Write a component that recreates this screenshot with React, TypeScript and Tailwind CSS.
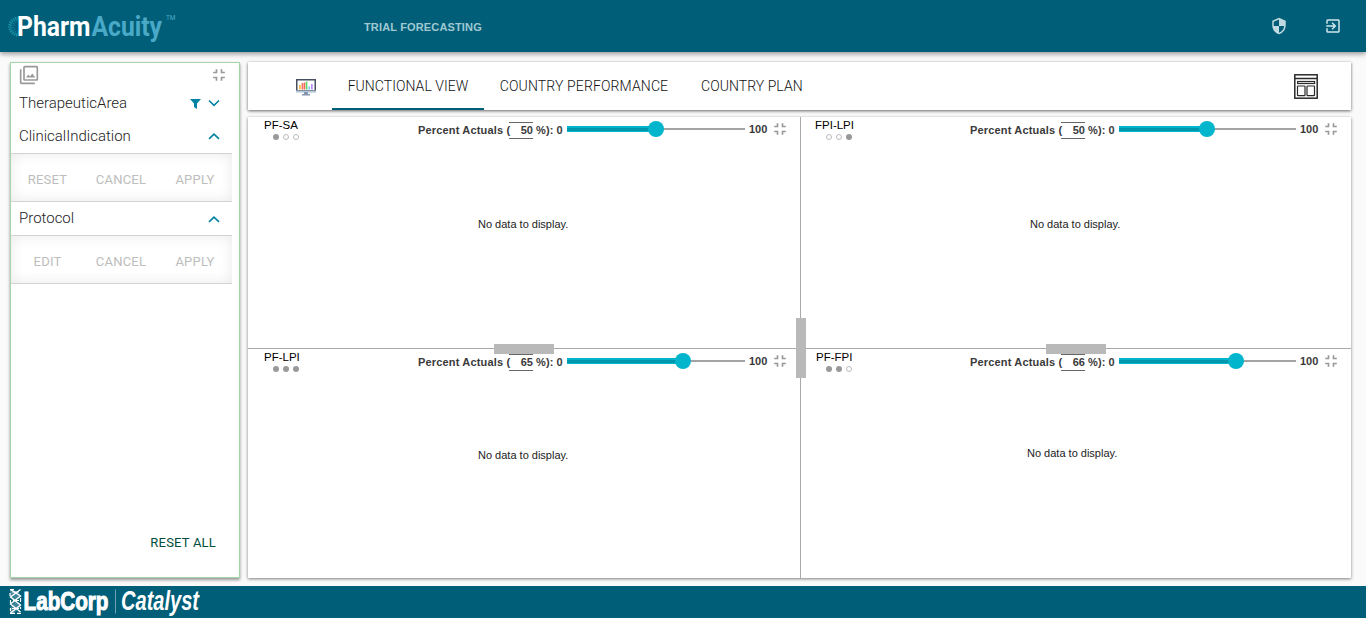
import { MdExitToApp, MdFilter, MdFullscreenExit, MdSecurity } from 'react-icons/md';

function Chevron({ up = false }: { up?: boolean }) {
  return (
    <svg width="12" height="8" viewBox="0 0 12 8" fill="none" stroke="#0083a3" strokeWidth="1.6">
      <path d={up ? 'M1 6.9 6 2.1 11 6.9' : 'M1 1.5 6 6.3 11 1.5'} />
    </svg>
  );
}

function PharmAcuityLogo() {
  return (
    <svg width="190" height="50" viewBox="0 0 190 50" className="block shrink-0 overflow-visible">
      <path d="M18.500 18A8.500 8.500 0 0 0 18.500 35" fill="none" stroke="#1c93a8" strokeWidth="3.4" strokeDasharray="1.2 1" />
      <path d="M19.500 20.500A6 6 0 0 0 19.500 32.500" fill="none" stroke="#14798f" strokeWidth="2" strokeDasharray="1 1" />
      <g fontFamily="Roboto, 'Liberation Sans', sans-serif" fontWeight="700" fontSize="28">
        <text x="17" y="36.3" textLength="73.5" lengthAdjust="spacingAndGlyphs" fill="#fff">Pharm</text>
        <text x="91.5" y="36.3" textLength="70.5" lengthAdjust="spacingAndGlyphs" fill="#4ba9c8">Acuity</text>
      </g>
      <text x="166" y="20" textLength="9.5" lengthAdjust="spacingAndGlyphs" fontFamily="Roboto, sans-serif" fontSize="7.5" fill="#4ba9c8">TM</text>
    </svg>
  );
}

function LabCorpLogo() {
  return (
    <svg width="204" height="32" viewBox="0 0 204 32" className="block overflow-visible">
      <path d="M10 3.5h3l8 5.500-5 5.500 5 6-7 6.500h-4v-5l5-6.500-5-6z" fill="#fff" opacity=".25" />
      <g fill="none" stroke="#fff">
        <path d="M10.500 3.500 20.500 10 10.500 18 20.500 26" strokeWidth="1.4" />
        <path d="M20.500 3.500 10.500 11 20.500 19 10.500 27" strokeWidth="1.4" />
        <path d="M10 7v3M10.500 14v3M10.500 22v3M20.500 12v4M20.500 21v2M12 6h7M13 14.500h6M12 22.500h7M10 3.700h4M17 27.300h4M10 27.300h5" strokeWidth="1.2" />
      </g>
      <g fontFamily="'Liberation Sans', Arial, sans-serif" fontWeight="700" fill="#fff">
        <text x="23.5" y="23.7" fontSize="26.5" textLength="85" lengthAdjust="spacingAndGlyphs" stroke="#fff" strokeWidth="1.1">LabCorp</text>
        <text x="121" y="23.7" fontSize="27" textLength="78" lengthAdjust="spacingAndGlyphs" fontStyle="italic">Catalyst</text>
      </g>
      <path d="M115.5 3.5v24" stroke="#6fa3b3" />
    </svg>
  );
}

function MonitorChart() {
  return (
    <svg width="22" height="18" viewBox="0 0 22 18" className="block">
      <rect x="1.75" y="1.75" width="18.5" height="11" fill="#fff" stroke="#48505f" strokeWidth="1.5" />
      <path d="M1 12.500h20v2.200H1z" fill="#b9cbdc" />
      <path d="M9 14h4v2h2v1.500H7V16h2z" fill="#8495ad" />
      <path d="M4 7h1.800v4.500H4z" fill="#f5c04e" />
      <path d="M6.600 5h1.800v6.500H6.600z" fill="#fa6f60" />
      <path d="M8.800 4.500h1.500v7H8.800z" fill="#f06d55" />
      <path d="M10.800 3.500h1.600v8h-1.600z" fill="#5fd36c" />
      <path d="M13.300 8.500H15v3h-1.700z" fill="#7ecbf7" />
      <path d="M16 6h1.700v5.500H16z" fill="#b48cf5" />
    </svg>
  );
}

function LayoutIcon() {
  return (
    <svg width="24" height="25" viewBox="0 0 24 25" fill="none" stroke="#2a2a2a" strokeWidth="1.2" className="block">
      <rect x=".8" y=".8" width="22.4" height="23.4" strokeWidth="1.5" />
      <path d="M1 4.500h22" strokeWidth="1.5" />
      <rect x="3.6" y="7.5" width="17" height="2" />
      <rect x="3.5" y="12" width="7.5" height="9.6" rx=".6" />
      <rect x="13" y="12" width="7.5" height="9.6" rx=".6" />
    </svg>
  );
}

function ActionRow({ first }: { first: string }) {
  return (
    <div className="flex h-[49px] w-[221px] items-center border-y border-[#d3d3d3] pt-1 font-['Roboto'] text-[13px] tracking-[0.2px] text-[#bdbdbd] shadow-[inset_0_0_14px_rgba(0,0,0,0.09)]">
      <span className="w-[73px] text-center">{first}</span>
      <span className="w-[74px] text-center">CANCEL</span>
      <span className="w-[74px] text-center">APPLY</span>
    </div>
  );
}

function Sidebar() {
  return (
    <aside className="flex w-[230px] shrink-0 flex-col border border-[#a5d6a7] bg-white shadow-[0_2px_3px_rgba(0,0,0,0.4)]">
      <div className="flex h-6 items-center justify-between pl-2 pr-[10px]">
        <MdFilter size={20} color="#999" />
        <MdFullscreenExit size={20} color="#999" />
      </div>
      <div className="flex h-8 items-center pl-2 pr-[19px]">
        <span className="grow font-['Roboto'] text-[15px] font-light text-[#222]">TherapeuticArea</span>
        <svg width="11" height="10" viewBox="0 0 11 10" className="mr-[7px] mt-px">
          <path d="M0 0h11L7 4.500V10L4 8V4.500z" fill="#0083a3" />
        </svg>
        <Chevron />
      </div>
      <div className="flex h-[34px] items-center pl-2 pr-[19px]">
        <span className="grow font-['Roboto'] text-[15px] font-light text-[#222]">ClinicalIndication</span>
        <Chevron up />
      </div>
      <ActionRow first="RESET" />
      <div className="flex h-[33px] items-center pl-2 pr-[19px]">
        <span className="grow font-['Roboto'] text-[15px] font-light text-[#222]">Protocol</span>
        <Chevron up />
      </div>
      <ActionRow first="EDIT" />
      <div className="mb-[24px] mt-auto pr-[23px] text-right font-['Roboto'] text-[13px] leading-5 tracking-[0.2px] text-[#004d40]">
        RESET ALL
      </div>
    </aside>
  );
}

interface ForecastProps {
  name: string;
  nameStyle: string;
  dots: boolean[];
  percent: number;
  fill: number;
  leading: string;
  track: string;
  message: string;
}

function Forecast({ name, nameStyle, dots, percent, fill, leading, track, message }: ForecastProps) {
  return (
    <section className="min-w-0">
      <div className="flex h-[30px]">
        <div className={`shrink-0 pt-px ${leading}`}>
          <div className={`h-[14px] text-[11.5px] leading-[15px] text-black ${nameStyle}`}>{name}</div>
          <div className="flex gap-1 pl-[9px] pt-0.5">
            {dots.map((on, i) => (
              <i key={i} className={on ? 'size-1.5 rounded-full bg-[#999]' : 'size-1.5 rounded-full border border-[#bbb]'} />
            ))}
          </div>
        </div>
        <div className="flex w-[149px] shrink-0 items-start whitespace-nowrap pt-[5px] text-[11px] font-bold leading-4 tracking-[0.17px] text-[#3a3a3a]">
          <span className="w-[91px]">Percent Actuals (</span>
          <span className="h-[17px] w-6 border-y border-[#666] text-right leading-[15px] tracking-normal">{percent}</span>
          <span className="ml-[3px] tracking-[0.1px]">%): 0</span>
        </div>
        <div className={`relative mt-[9px] flex h-1.5 shrink-0 items-center ${track}`}>
          <div className="h-1.5 border-b border-t-2 border-[#00b5cc] bg-[#0097ac]" style={{ width: fill }} />
          <div className="h-0.5 grow bg-[#a3a3a3]" />
          <i className="absolute -top-[5px] size-4 rounded-full bg-[#00b5cc]" style={{ left: fill - 8 }} />
        </div>
        <span className="ml-1 w-[21px] shrink-0 pt-1 text-[11px] font-bold leading-4 text-[#3a3a3a]">100</span>
        <MdFullscreenExit size={20} color="#999" className="mt-0.5 shrink-0" />
      </div>
      <div className={`text-[11px] leading-4 text-[#222] ${message}`}>No data to display.</div>
    </section>
  );
}

export default function App() {
  return (
    <div className="flex h-[618px] w-[1366px] flex-col overflow-hidden bg-[#fafafa] font-['Liberation_Sans',Arial,sans-serif]">
      <header className="z-10 flex h-[52px] shrink-0 items-center bg-[#005e78] shadow-[0_2px_5px_rgba(0,0,0,0.4)]">
        <div className="mb-0.5 w-[364px]"><PharmAcuityLogo /></div>
        <span className="grow pt-0.5 text-[11px] font-bold tracking-[0.15px] text-[#9fc8d2]">TRIAL FORECASTING</span>
        <MdSecurity size={18} color="#bfdae1" />
        <MdExitToApp size={18} color="#cfe5ea" className="ml-9 mr-6" />
      </header>
      <div className="flex h-[534px] shrink-0 gap-2 pb-2 pl-[10px] pr-[15px] pt-[10px]">
        <Sidebar />
        <main className="flex grow flex-col">
          <nav className="flex h-[48px] shrink-0 bg-white font-['Roboto'] text-sm font-light leading-[48px] text-[#111] shadow-[0_1px_3px_rgba(0,0,0,0.6)]">
            <div className="w-[84px] pl-[47px] pt-4"><MonitorChart /></div>
            <div className="w-[152px] border-b-2 border-[#005e78] text-center tracking-[0.05px]">FUNCTIONAL VIEW</div>
            <div className="w-[200px] text-center tracking-[0.13px]">COUNTRY PERFORMANCE</div>
            <div className="grow pl-[17px] tracking-[0.05px]">COUNTRY PLAN</div>
            <div className="pr-[33px] pt-3"><LayoutIcon /></div>
          </nav>
          <div className="relative mt-[7px] grid h-[461px] grid-cols-[552px_1px_550px] grid-rows-[231px_1px_229px] bg-white shadow-[0_1px_3px_rgba(0,0,0,0.5)]">
            <Forecast name="PF-SA" nameStyle="" dots={[true, false, false]} percent={50} fill={89} leading="w-[170px] pl-4" track="w-[178px]" message="mt-[69px] pl-[230px]" />
            <div className="row-span-3 bg-[#aaa]" />
            <Forecast name="FPI-LPI" nameStyle="-ml-[2px]" dots={[false, false, true]} percent={50} fill={88} leading="w-[169px] pl-4" track="w-[177px]" message="mt-[69px] pl-[229px]" />
            <div className="bg-[#aaa]" />
            <div className="bg-[#aaa]" />
            <Forecast name="PF-LPI" nameStyle="" dots={[true, true, true]} percent={65} fill={116} leading="w-[170px] pl-4" track="w-[178px]" message="mt-[68px] pl-[230px]" />
            <Forecast name="PF-FPI" nameStyle="-ml-px" dots={[true, true, false]} percent={66} fill={117} leading="w-[169px] pl-4" track="w-[177px]" message="mt-[66px] pl-[226px]" />
            <i className="absolute left-[548px] top-[201px] h-[60px] w-[10px] bg-[#b9b9b9]" />
            <i className="absolute left-[246px] top-[227px] h-[10px] w-[60px] bg-[#b9b9b9]" />
            <i className="absolute left-[798px] top-[227px] h-[10px] w-[60px] bg-[#b9b9b9]" />
          </div>
        </main>
      </div>
      <footer className="h-8 shrink-0 bg-[#005e78]"><LabCorpLogo /></footer>
    </div>
  );
}
